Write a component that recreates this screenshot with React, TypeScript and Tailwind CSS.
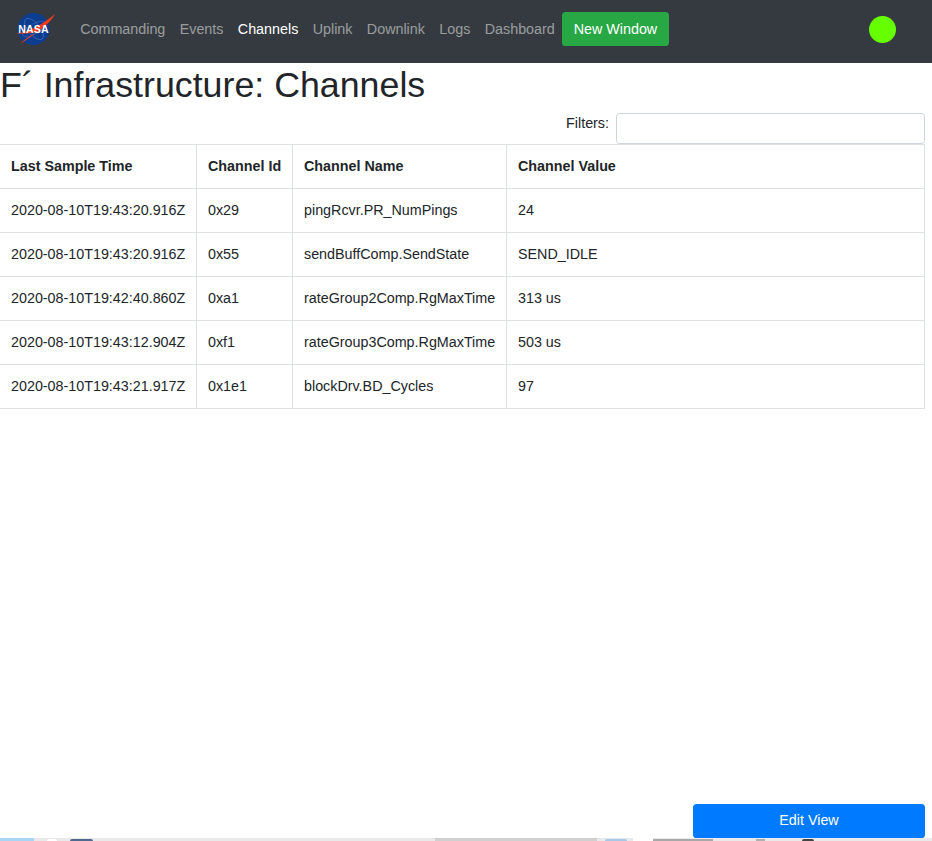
const links = ["Commanding", "Events", "Channels", "Uplink", "Downlink", "Logs", "Dashboard"];

const rows = [
  ["2020-08-10T19:43:20.916Z", "0x29", "pingRcvr.PR_NumPings", "24"],
  ["2020-08-10T19:43:20.916Z", "0x55", "sendBuffComp.SendState", "SEND_IDLE"],
  ["2020-08-10T19:42:40.860Z", "0xa1", "rateGroup2Comp.RgMaxTime", "313 us"],
  ["2020-08-10T19:43:12.904Z", "0xf1", "rateGroup3Comp.RgMaxTime", "503 us"],
  ["2020-08-10T19:43:21.917Z", "0x1e1", "blockDrv.BD_Cycles", "97"],
];

const NasaLogo = () => (
  <svg width="42" height="36" viewBox="0 0 42 36" className="shrink-0">
    <circle cx="18.5" cy="18" r="16" fill="#0b3d91" />
    <ellipse cx="19" cy="18" rx="13" ry="6" fill="none" stroke="#5f7fc0" strokeWidth="0.5" transform="rotate(50 19 18)" />
    <ellipse cx="19" cy="18" rx="13" ry="5" fill="none" stroke="#5f7fc0" strokeWidth="0.4" transform="rotate(-30 19 18)" />
    <path d="M1 22.5 C14 21 28 13 40 3 C35 13 23 21 5 33 C13 25 19 23 24 20.5 C15 22.5 8 23 1 22.5 Z" fill="#f03a1e" />
    <text x="18.5" y="22" textAnchor="middle" fill="#fff" fontSize="10.5" fontWeight="700" letterSpacing="0.2" fontFamily="Liberation Sans, sans-serif">NASA</text>
  </svg>
);

export default function App() {
  return (
    <div className="flex h-[841px] flex-col overflow-hidden bg-white font-['Liberation_Sans',Arial,sans-serif] text-[14.32px] leading-[21.6px] text-[#212529]">
      <nav className="flex h-[63px] shrink-0 items-center bg-[#343a40] pr-[36px] pb-[5px]">
        <div className="ml-[15px] flex w-[58px] shrink-0">
          <NasaLogo />
        </div>
        {links.map((l) => (
          <a key={l} className={`px-[7.2px] pt-px ${l === "Channels" ? "text-white" : "text-[#ffffff80]"}`}>
            {l}
          </a>
        ))}
        <button className="h-[34px] w-[107px] rounded-[3.6px] bg-[#28a745] pt-px text-white">New Window</button>
        <div className="ml-auto size-[27px] rounded-full bg-[#66ff00]" />
      </nav>

      <div className="w-[925px] grow">
        <h1 className="pt-px text-[35.75px] leading-[43.2px] font-normal">F´ Infrastructure: Channels</h1>
        <div className="mt-[6px] flex justify-end">
          <label className="mr-[7px]">Filters:</label>
          <input className="h-[31px] w-[309px] rounded-[3.6px] border border-[#ced4da] bg-white" />
        </div>
        <table className="w-full table-fixed border-collapse whitespace-nowrap">
          <thead>
            <tr className="h-[44px]">
              <th className="w-[196.5px] border border-l-0 border-[#dee2e6] px-[11px] text-left font-bold">Last Sample Time</th>
              <th className="w-[96px] border border-[#dee2e6] px-[11px] text-left font-bold">Channel Id</th>
              <th className="w-[214px] border border-[#dee2e6] px-[11px] text-left font-bold">Channel Name</th>
              <th className="border border-[#dee2e6] px-[11px] text-left font-bold">Channel Value</th>
            </tr>
          </thead>
          <tbody>
            {rows.map((r, i) => (
              <tr key={i} className="h-[44px]">
                <td className="border border-l-0 border-[#dee2e6] px-[11px]">{r[0]}</td>
                <td className="border border-[#dee2e6] px-[11px]">{r[1]}</td>
                <td className="border border-[#dee2e6] px-[11px]">{r[2]}</td>
                <td className="border border-[#dee2e6] px-[11px]">{r[3]}</td>
              </tr>
            ))}
          </tbody>
        </table>
      </div>

      <div className="flex w-[925px] shrink-0 justify-end">
        <button className="h-[34px] w-[232px] rounded-[3.6px] bg-[#007bff] text-white">Edit View</button>
      </div>
      <div className="flex h-[3px] shrink-0 items-end bg-[#e9e9e9]">
        <div className="h-[3px] w-[34px] bg-[#a8d4f5]" />
        <div className="ml-[13px] h-[2px] w-[10px] rounded-t-sm bg-white" />
        <div className="ml-[13px] h-[2px] w-[23px] rounded-t-sm bg-[#4f6a8f]" />
        <div className="ml-[342px] h-[3px] w-[162px] bg-[#d0d0d0]" />
        <div className="ml-[8px] h-[2px] w-[22px] rounded-t-sm bg-[#a8c8e8]" />
        <div className="ml-[6px] h-[3px] w-[20px] bg-white" />
        <div className="h-[2px] w-[60px] bg-[#a8a8a8]" />
        <div className="ml-[43px] h-[2px] w-[9px] bg-[#b0b0b0]" />
        <div className="ml-[37px] h-[2px] w-[12px] rounded-t-sm bg-[#444]" />
      </div>
    </div>
  );
}
